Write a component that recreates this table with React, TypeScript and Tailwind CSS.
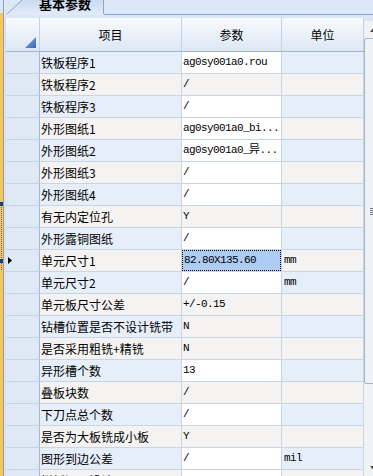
import React from "react";

type Row = { label: string; value: string; unit: string; white: boolean };

const rows: Row[] = [
  { label: "铁板程序1", value: "ag0sy001a0.rou", unit: "", white: true },
  { label: "铁板程序2", value: "/", unit: "", white: false },
  { label: "铁板程序3", value: "/", unit: "", white: true },
  { label: "外形图纸1", value: "ag0sy001a0_bi...", unit: "", white: true },
  { label: "外形图纸2", value: "ag0sy001a0_异...", unit: "", white: true },
  { label: "外形图纸3", value: "/", unit: "", white: true },
  { label: "外形图纸4", value: "/", unit: "", white: true },
  { label: "有无内定位孔", value: "Y", unit: "", white: false },
  { label: "外形露铜图纸", value: "/", unit: "", white: true },
  { label: "单元尺寸1", value: "82.80X135.60", unit: "mm", white: true },
  { label: "单元尺寸2", value: "/", unit: "mm", white: true },
  { label: "单元板尺寸公差", value: "+/-0.15", unit: "", white: false },
  { label: "钻槽位置是否不设计铣带", value: "N", unit: "", white: false },
  { label: "是否采用粗铣+精铣", value: "N", unit: "", white: false },
  { label: "异形槽个数", value: "13", unit: "", white: true },
  { label: "叠板块数", value: "/", unit: "", white: false },
  { label: "下刀点总个数", value: "/", unit: "", white: true },
  { label: "是否为大板铣成小板", value: "Y", unit: "", white: false },
  { label: "图形到边公差", value: "/", unit: "mil", white: true },
  { label: "拼板间距设计", value: "", unit: "", white: true },
];

const cjk = "font-['Noto_Sans_CJK_SC','Noto_Sans',sans-serif]";
const mono = "font-['Liberation_Mono','Noto_Sans_CJK_SC',monospace]";

function DataRow({ row, index }: { row: Row; index: number }) {
  const odd = index % 2 === 1;
  const band = odd ? "bg-[#f4f3f1]" : "bg-[#e6eef9]";
  const selected = index === 9;
  const valueBg = selected ? "bg-[#aecdf5]" : row.white ? "bg-white" : "bg-[#f4f3f1]";
  return (
    <div className="flex h-[22px] shrink-0">
      <div className="w-[34px] shrink-0 flex items-center bg-[#dfe8f5] border-b border-r border-b-[#c5d4e8] border-r-[#a4b9d6]">
        {selected && (
          <svg width="10" height="8" viewBox="0 0 10 8" className="ml-[2px]">
            <path d="M0 0 L4 3.5 L0 7 Z" fill="#000" />
          </svg>
        )}
      </div>
      <div
        className={`w-[142px] shrink-0 ${band} border-b border-r border-[#c7d5e9] pl-[1px] flex items-center text-[12px] leading-[21px] text-black whitespace-nowrap overflow-hidden ${cjk}`}
      >
        {row.label}
      </div>
      <div
        className={`w-[100px] shrink-0 ${valueBg} border-b border-r border-[#c7d5e9] flex items-center overflow-hidden`}
      >
        <div
          className={`h-full w-full flex items-center pl-[1px] text-[11px] tracking-[-0.6px] text-black whitespace-nowrap ${mono} ${
            selected ? "border border-dotted border-black" : ""
          }`}
        >
          {row.value}
        </div>
      </div>
      <div
        className={`w-[82px] shrink-0 ${band} border-b border-r border-[#c7d5e9] pl-[2px] flex items-center text-[11px] tracking-[-0.6px] text-black ${mono}`}
      >
        {row.unit}
      </div>
    </div>
  );
}

function ScrollBar() {
  return (
    <div className="flex-1 flex flex-col bg-[#f1f2f4] h-full">
      <div className="h-[3px] bg-[#dbe6f4]" />
      <div className="h-[17px] flex items-center justify-center pl-[6px]">
        <svg width="8" height="5" viewBox="0 0 8 5">
          <path d="M0 5 L4 0 L8 5 Z" fill="#4a4a4a" />
        </svg>
      </div>
      <div className="h-[346px] mx-0 border border-[#a9b5c5] rounded-[2px] bg-[#eef1f5] flex items-center justify-center">
        <div className="flex flex-col gap-[1px] w-[6px] mr-[-4px]">
          <div className="h-[1px] bg-[#6d7785]" />
          <div className="h-[1px] bg-[#6d7785]" />
          <div className="h-[1px] bg-[#6d7785]" />
          <div className="h-[1px] bg-[#6d7785]" />
        </div>
      </div>
      <div className="flex-1" />
      <div className="h-[10px] flex items-start justify-center pl-[6px]">
        <svg width="8" height="5" viewBox="0 0 8 5">
          <path d="M0 0 L4 5 L8 0 Z" fill="#4a4a4a" />
        </svg>
      </div>
    </div>
  );
}

export default function App() {
  return (
    <div className="w-[373px] h-[476px] overflow-hidden flex bg-[#dbe6f4]">
      {/* left splitter strip */}
      <div className="w-[3px] shrink-0 flex flex-col">
        <div className="h-[13px] bg-[#dbe6f4]" />
        <div className="flex-1 bg-[#f7c55a] relative">
          <div className="absolute left-0 top-[189px] w-[3px] h-[4px] bg-[#1f3f7a]" />
          <div className="absolute left-[1px] top-[194px] w-[1px] h-[63px] border-l border-dotted border-[#5a6a88]" />
          <div className="absolute left-0 top-[246px] w-[3px] h-[4px] bg-[#1f3f7a]" />
        </div>
      </div>
      <div className="w-[1px] shrink-0 bg-[#8ea2bd]" />

      {/* main */}
      <div className="flex-1 flex flex-col min-w-0">
        {/* tab strip */}
        <div className="h-[15px] shrink-0 flex items-end bg-[#dde8f6]">
          <div className="relative w-[98px] h-[15px] ml-[2px] shrink-0">
            <svg
              width="98"
              height="15"
              viewBox="0 0 98 15"
              className="absolute inset-0"
            >
              <defs>
                <linearGradient id="tabg" x1="0" y1="0" x2="0" y2="1">
                  <stop offset="0" stopColor="#c9daf1" />
                  <stop offset="1" stopColor="#e3ecf8" />
                </linearGradient>
              </defs>
              <path d="M0 15 L16 0 L97.5 0 L97.5 15 Z" fill="url(#tabg)" />
              <path d="M0.5 14.5 L16 0" stroke="#8aa6cc" strokeWidth="1" fill="none" />
              <path d="M97.5 0 L97.5 14" stroke="#8aa6cc" strokeWidth="1" fill="none" />
            </svg>
            <div
              className={`relative mt-[-4px] ml-[33px] text-[13px] leading-[16px] font-bold text-black whitespace-nowrap ${cjk}`}
            >
              基本参数
            </div>
          </div>
          <div className="flex-1 h-[1px] bg-[#7fa6dc]" />
        </div>
        <div className="h-[3px] shrink-0 bg-[#dae6f5]" />

        {/* grid + scrollbar */}
        <div className="flex-1 flex min-h-0">
          <div className="w-[2px] shrink-0 bg-[#d6e2f2]" />
          <div className="w-[358px] shrink-0 flex flex-col overflow-hidden">
            {/* header */}
            <div className="h-[34px] shrink-0 flex bg-gradient-to-b from-[#f8fafd] to-[#dde7f4] border-b border-[#9fb5d3]">
              <div className="w-[34px] shrink-0 border-r border-[#c3d1e5] flex items-end justify-end pb-[3px] pr-[3px]">
                <svg width="11" height="11" viewBox="0 0 11 11">
                  <defs>
                    <linearGradient id="tri" x1="0" y1="0" x2="1" y2="1">
                      <stop offset="0" stopColor="#8fb5ea" />
                      <stop offset="1" stopColor="#2f63bd" />
                    </linearGradient>
                  </defs>
                  <path d="M0 11 L11 0 L11 11 Z" fill="url(#tri)" />
                </svg>
              </div>
              <div
                className={`w-[142px] shrink-0 border-r border-[#c3d1e5] flex items-center justify-center text-[12px] text-black ${cjk}`}
              >
                项目
              </div>
              <div
                className={`w-[100px] shrink-0 border-r border-[#c3d1e5] flex items-center justify-center text-[12px] text-black ${cjk}`}
              >
                参数
              </div>
              <div
                className={`w-[82px] shrink-0 border-r border-[#c3d1e5] flex items-center justify-center text-[12px] text-black ${cjk}`}
              >
                单位
              </div>
            </div>
            {rows.map((r, i) => (
              <DataRow key={i} row={r} index={i} />
            ))}
          </div>
          <ScrollBar />
        </div>
      </div>
    </div>
  );
}
